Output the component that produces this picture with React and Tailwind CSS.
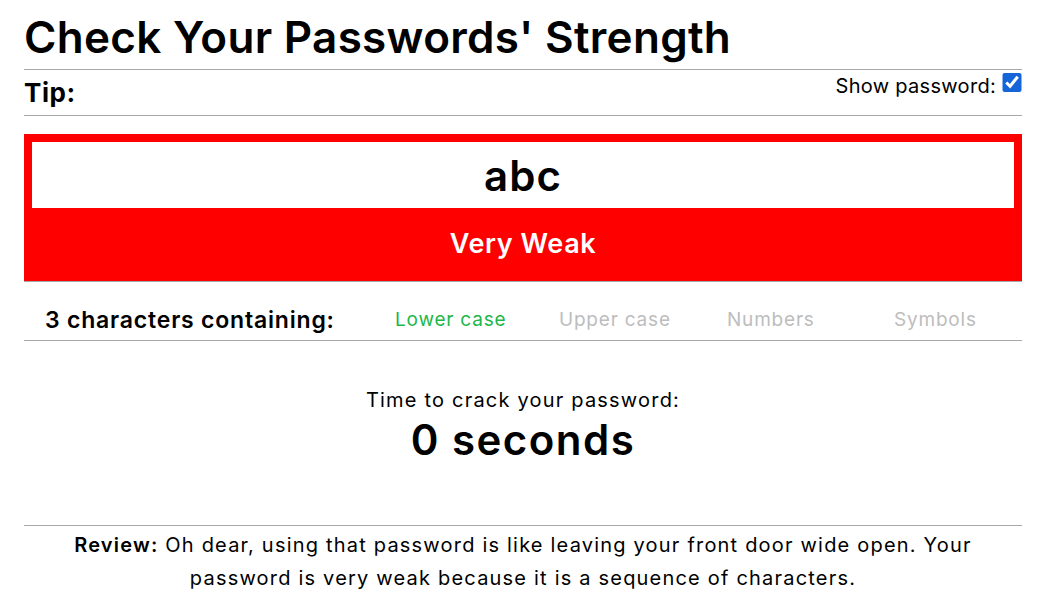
export default function App() {
  const font = { fontFamily: "Inter, 'Noto Sans', sans-serif" };
  return (
    <div className="bg-white text-black w-[1061px] h-[615px] overflow-hidden" style={font}>
      <div className="ml-[24px] w-[998px]">
        <h1 className="h-[69px] flex items-center text-[44px] font-semibold tracking-[0.3px] leading-none pt-[4px] whitespace-nowrap">
          Check Your Passwords' Strength
        </h1>
        <div className="h-px bg-[#a8a8a8]" />
        <div className="h-[45px] flex justify-between">
          <div className="text-[26px] font-bold tracking-[0.6px] pt-[10px] leading-none">Tip:</div>
          <label className="flex items-start text-[20px] tracking-[0.3px] pt-[4px] leading-none">
            <span className="pt-[2px] mr-[6px]">Show password:</span>
            <input type="checkbox" defaultChecked className="w-[20px] h-[19px] m-0 mt-[-1px] accent-[#1565d8]" />
          </label>
        </div>
        <div className="h-px bg-[#a8a8a8]" />
        <div className="mt-[18px] bg-[#ff0000] pt-[8px] px-[8px] h-[148px] border-b border-[#a8a8a8]">
          <div className="bg-white h-[66px] flex items-center justify-center text-[42px] tracking-[1px] font-semibold">abc</div>
          <div className="h-[73px] flex items-center justify-center text-white text-[27px] tracking-[0.6px] font-semibold">Very Weak</div>
        </div>
        <div className="h-[58px] flex items-center text-[19px] tracking-[0.8px] pt-[19px] whitespace-nowrap">
          <div className="w-[371px] pl-[21px] text-[23px] tracking-[0.8px] font-semibold">3 characters containing:</div>
          <div className="w-[164px] text-[#1db74a]">Lower case</div>
          <div className="w-[168px] text-[#bdbdbd]">Upper case</div>
          <div className="w-[167px] text-[#bdbdbd]">Numbers</div>
          <div className="text-[#bdbdbd]">Symbols</div>
        </div>
        <div className="h-px bg-[#a8a8a8]" />
        <div className="h-[184px] flex flex-col items-center pt-[49px]">
          <div className="text-[20px] tracking-[1.2px] leading-none">Time to crack your password:</div>
          <div className="text-[42px] tracking-[1.5px] font-semibold leading-none mt-[9px]">0 seconds</div>
        </div>
        <div className="h-px bg-[#a8a8a8]" />
        <p className="text-center text-[20px] tracking-[1.2px] leading-[33px] pt-[3px] px-[30px]">
          <span className="font-semibold">Review:</span> Oh dear, using that password is like leaving your front door wide open. Your password is very weak because it is a sequence of characters.
        </p>
      </div>
    </div>
  );
}
